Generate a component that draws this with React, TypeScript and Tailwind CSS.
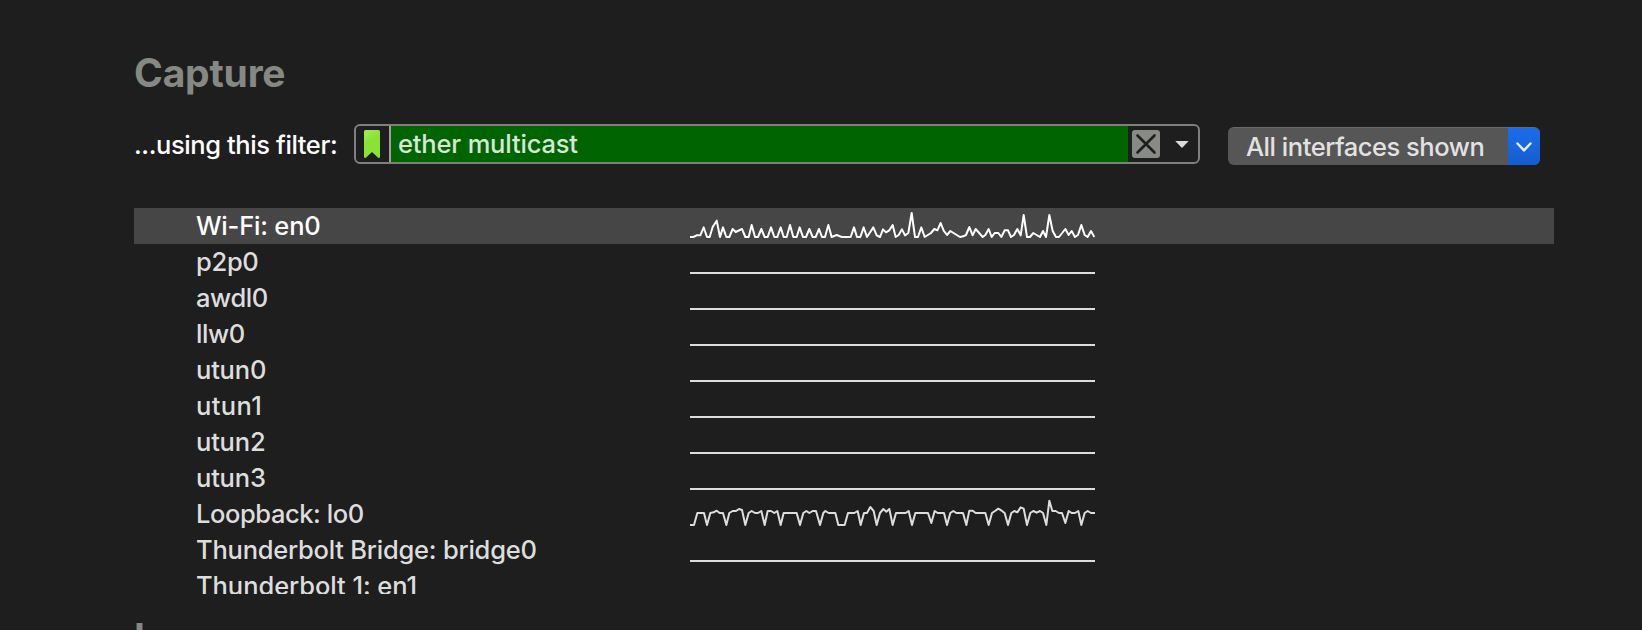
const WIFI =
  "30,96 40,96 50,91 61,91 71,67 81,96 89,96 98,66 110,47 120,96 129,67 139,96 148,96 158,72 167,81 186,72 196,96 206,96 215,60 225,96 234,96 244,72 254,96 263,96 273,67 283,96 292,96 302,67 311,96 320,96 330,60 340,96 350,96 359,67 369,96 378,96 388,72 398,96 407,96 417,72 426,96 435,96 445,60 455,96 470,90 485,96 512,96 522,67 531,96 541,96 551,67 561,96 580,67 590,91 600,96 609,73 618,82 628,76 638,60 647,96 656,90 666,73 675,91 685,84 695,24 705,96 714,96 724,67 734,96 753,84 763,72 772,76 782,54 791,77 801,90 811,78 840,96 850,94 858,90 868,66 878,91 887,72 908,96 916,90 926,72 935,96 944,84 955,84 964,96 974,76 984,76 993,96 1002,90 1012,72 1022,91 1031,30 1041,96 1050,96 1060,84 1080,96 1089,78 1098,96 1108,30 1118,78 1128,96 1137,96 1156,72 1166,90 1175,78 1185,96 1194,90 1204,60 1214,90 1223,96 1233,78 1243,96";
const LOOPBACK =
  "30,90 42,90 52,54 72,54 81,90 91,54 101,52 110,47 119,54 129,54 139,90 148,54 158,48 168,48 177,42 186,45 196,90 206,54 215,48 225,54 234,54 244,48 254,90 263,48 273,48 283,54 292,48 302,90 311,54 350,54 360,90 370,54 379,48 388,54 398,48 408,48 420,90 430,54 436,48 446,54 466,54 475,90 494,90 504,54 523,54 533,48 542,90 552,54 561,54 571,36 581,48 590,90 600,54 610,42 619,50 628,42 638,90 648,54 677,54 686,48 696,90 706,54 744,54 754,84 764,48 773,54 792,54 801,90 811,54 820,48 829,54 849,54 859,90 868,47 878,47 887,54 916,54 926,90 936,54 945,48 955,41 965,47 974,54 984,90 994,54 1003,48 1012,52 1022,37 1031,41 1041,90 1051,54 1060,48 1070,53 1080,48 1089,54 1099,90 1108,17 1117,48 1127,48 1137,54 1146,54 1156,84 1166,48 1175,54 1185,54 1195,48 1204,90 1214,54 1223,48 1233,54 1245,54";
const FLAT = "30,96 1245,96";

type Row = { name: string; tracking: string; points?: string; top?: number; selected?: boolean };

const ROWS: Row[] = [
  { name: "Wi-Fi: en0", tracking: "tracking-[-0.2px]", points: WIFI, top: 9, selected: true },
  { name: "p2p0", tracking: "tracking-[-0.3px]", points: FLAT, top: 9 },
  { name: "awdl0", tracking: "tracking-[-0.4px]", points: FLAT, top: 9 },
  { name: "llw0", tracking: "tracking-[-0.4px]", points: FLAT, top: 9 },
  { name: "utun0", tracking: "tracking-[-0.2px]", points: FLAT, top: 9 },
  { name: "utun1", tracking: "tracking-[0.4px]", points: FLAT, top: 9 },
  { name: "utun2", tracking: "tracking-[-0.2px]", points: FLAT, top: 9 },
  { name: "utun3", tracking: "tracking-[-0.2px]", points: FLAT, top: 9 },
  { name: "Loopback: lo0", tracking: "tracking-[-0.42px]", points: LOOPBACK, top: 9 },
  { name: "Thunderbolt Bridge: bridge0", tracking: "tracking-[-0.23px]", points: FLAT, top: 9 },
  { name: "Thunderbolt 1: en1", tracking: "tracking-[-0.06px]" },
].map((row) => (row.points === LOOPBACK ? { ...row, top: 3 } : row));

function InterfaceRow({ row }: { row: Row }) {
  return (
    <li
      className={
        row.selected
          ? "flex h-9 items-center bg-[#464646] pl-[62px] text-white"
          : "flex h-9 items-center pl-[62px] text-[#dddddd]"
      }
    >
      <span className={`w-[494px] shrink-0 whitespace-nowrap ${row.tracking}`}>{row.name}</span>
      {row.points && (
        <svg
          className="h-9 w-[405px] shrink-0"
          viewBox={`30 ${row.top} 1215 108`}
          fill="none"
          stroke="currentColor"
          strokeWidth="6"
          strokeLinejoin="round"
        >
          <polyline points={row.points} />
        </svg>
      )}
    </li>
  );
}

export default function App() {
  return (
    <main className="flex h-[630px] w-[1642px] flex-col overflow-hidden bg-[#1e1e1e] pl-[134px] font-['Inter',sans-serif] text-[25.5px] leading-9 font-[450] text-white">
      <h1 className="mt-[49px] h-12 shrink-0 text-[39px] leading-[48px] font-bold tracking-[-0.2px] text-[#868883]">
        Capture
      </h1>
      <div className="mt-[27px] flex h-[42px] shrink-0 items-start">
        <label className="mt-[3px] w-[220px] shrink-0 whitespace-nowrap tracking-[-0.4px]">...using this filter:</label>
        <div className="flex h-10 w-[846px] shrink-0 items-center overflow-hidden rounded-md border-2 border-[#7f7f7f]">
          <div className="flex h-9 w-[35px] shrink-0 items-center border-r-2 border-[#a0a0a0] pl-2">
            <svg className="h-7 w-4" viewBox="0 0 16 28">
              <defs>
                <linearGradient id="mark" x1="0" y1="0" x2="0.4" y2="1">
                  <stop offset="0" stopColor="#a4ea5c" />
                  <stop offset="0.5" stopColor="#8ae234" />
                  <stop offset="1" stopColor="#8ae234" />
                </linearGradient>
              </defs>
              <path d="M1.500 0h13Q16 0 16 1.500V27q0 1-1.500 1L8 22 1.500 28Q0 28 0 27V1.500Q0 0 1.500 0Z" fill="url(#mark)" />
            </svg>
          </div>
          <div className="h-9 w-[737px] shrink-0 bg-[#006400] pl-[7px] leading-[35px] tracking-[-0.17px] text-[#d7e6d7]">
            ether multicast
          </div>
          <svg className="ml-1 h-7 w-7 shrink-0" viewBox="0 0 28 28">
            <rect width="28" height="28" rx="3" fill="#888a85" />
            <path d="M5.500 5.500 22.500 22.500M22.500 5.500 5.500 22.500" stroke="#1e1e1e" strokeWidth="2.600" strokeLinecap="round" />
          </svg>
          <svg className="ml-[15px] h-[7px] w-[14px] shrink-0" viewBox="0 0 14 7">
            <path d="M0.300 0h13.400L7 7Z" fill="#d9dbd5" />
          </svg>
        </div>
        <button className="mt-[3px] ml-7 flex h-[38px] w-[312px] shrink-0 overflow-hidden rounded-md border-t border-[#686868] bg-[#565656] text-left text-[#e2e2e2]">
          <span className="w-[280px] pl-[18px] whitespace-nowrap leading-[37px] tracking-[-0.47px]">All interfaces shown</span>
          <span className="flex w-8 items-center justify-center bg-linear-to-b from-[#1b6cec] to-[#155dce]">
            <svg className="h-[10px] w-4" viewBox="0 0 16 10" fill="none" stroke="#e6edf9" strokeWidth="2.500" strokeLinecap="round" strokeLinejoin="round">
              <path d="M1.500 1.500 8 8.300 14.500 1.500" />
            </svg>
          </span>
        </button>
      </div>
      <ul className="mt-[42px] h-[386px] w-[1420px] shrink-0 overflow-hidden">
        {ROWS.map((row) => (
          <InterfaceRow key={row.name} row={row} />
        ))}
      </ul>
      <h2 className="mt-[20px] h-12 shrink-0 text-[39px] leading-[48px] font-bold tracking-[-0.5px] text-[#868883]">
        L
      </h2>
    </main>
  );
}
